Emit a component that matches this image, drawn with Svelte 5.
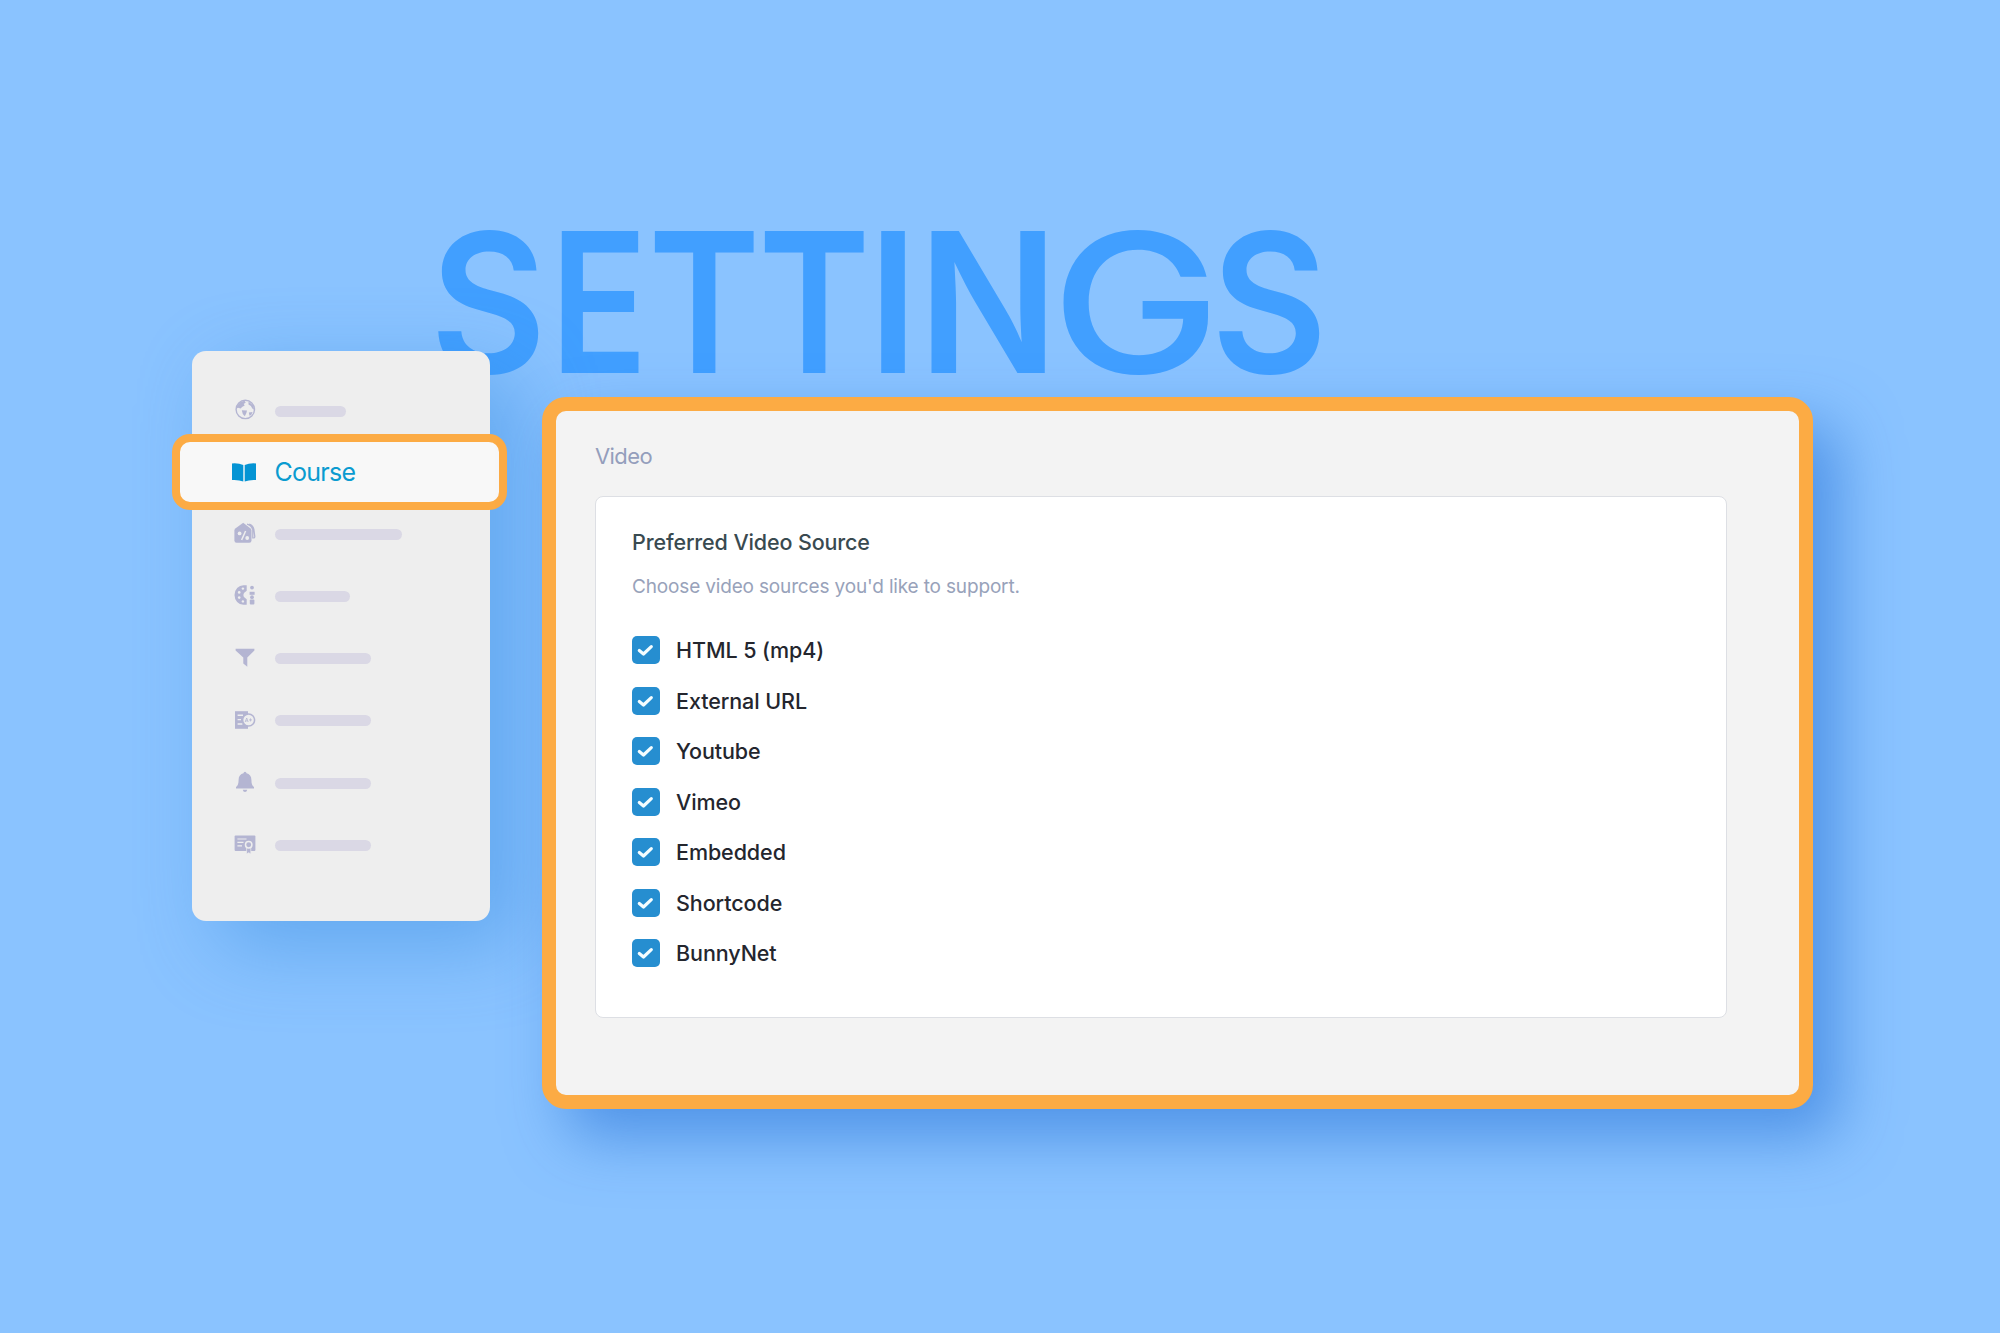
<script>
  // Each letter: slot width in px, horizontal scale and weight.
  const title = [
    { ch: 'S', slot: 119.8, scale: 0.921, weight: 580 },
    { ch: 'E', slot: 98.3, scale: 0.83, weight: 600 },
    { ch: 'T', slot: 109.5, scale: 0.876, weight: 590 },
    { ch: 'T', slot: 109.9, scale: 0.876, weight: 590 },
    { ch: 'I', slot: 50.3, scale: 0.93, weight: 590 },
    { ch: 'N', slot: 133.2, scale: 0.95, weight: 570 },
    { ch: 'G', slot: 159.6, scale: 1.17, weight: 530 },
    { ch: 'S', slot: 120, scale: 0.921, weight: 580 }
  ];
  const before = [{ icon: 'globe', width: 71 }];
  const after = [
    { icon: 'tag', width: 127 },
    { icon: 'instructor', width: 75 },
    { icon: 'funnel', width: 96 },
    { icon: 'grades', width: 96 },
    { icon: 'bell', width: 96 },
    { icon: 'certificate', width: 96 }
  ];
  const sources = ['HTML 5 (mp4)', 'External URL', 'Youtube', 'Vimeo', 'Embedded', 'Shortcode', 'BunnyNet'];
</script>

{#snippet icon(name)}
  <svg class="icon" viewBox="0 0 22 22" width="22" height="22" aria-hidden="true">
    {#if name === 'globe'}
      <circle cx="11.300" cy="10.400" r="9.200" fill="none" stroke="currentColor" stroke-width="1.400" />
      <path d="M3.200 6.500 6.500 3l4-1.200 1.200 1.800-2 1.400 1 1.400-2.700 1.600-1.200 1.400-2.800-.6-1.600.6zM7.800 11.200l5.200.2-.6 2.600-1.600 3.200-2-2.200zM14.500 2.600l4.700 3.800.9 4.400-1.800-1.200-1.400-2.600-2.400-1.600zM14.800 13.400l3.800-.4-1.400 3-1.700.8z" fill="currentColor" />
    {:else if name === 'tag'}
      <path d="M9.200.8 16.600 6.400Q17.500 7.200 17.500 8.400V18.500Q17.500 20.700 15.300 20.700H2.600Q.4 20.700.4 18.500V8.400Q.4 7.200 1.300 6.400z" fill="currentColor" />
      <path d="M13 2.200Q17.200 3.400 18.800 7.600V16.500M15.200 2.200Q18.800 3.200 19.800 7.200L20.800 14.600Q20.800 15.900 19.600 16.200" fill="none" stroke="currentColor" stroke-width="1.300" />
      <path d="M11.600 9 7.600 18" stroke="#eee" stroke-width="1.500" />
      <circle cx="5.600" cy="11.400" r="1.900" fill="#eee" /><circle cx="13.200" cy="16" r="1.900" fill="#eee" />
    {:else if name === 'instructor'}
      <path d="M9.500 1.200h3.200v5.600l-2.200 1.600a4 4 0 0 0 0 5.200l2.200 1.600v5.600H9.500A9 9.800 0 0 1 9.500 1.200z" fill="currentColor" />
      <g fill="#eee"><circle cx="8.900" cy="4.600" r="1.200" /><circle cx="5.200" cy="8.400" r="1.300" /><circle cx="5.200" cy="13.600" r="1.300" /><circle cx="8.900" cy="17.400" r="1.200" /></g>
      <g fill="currentColor"><circle cx="18" cy="3.600" r="1.900" /><rect x="15.600" y="7.800" width="5" height="3" /><circle cx="18" cy="13.200" r="1.900" /><rect x="15.800" y="15.400" width="4.600" height="5.200" rx="1" /></g>
    {:else if name === 'funnel'}
      <path d="M1.600 1.800H20.400V3.600L13.300 10.600V19.800L9.300 16.600V10.600L1.600 3.600z" fill="currentColor" />
    {:else if name === 'grades'}
      <path d="M1 2.200H14V19.800H1z" fill="currentColor" />
      <path d="M3.600 6.200H9M3.600 10.600H7M3.600 15H8.400" stroke="#eee" stroke-width="1.400" />
      <circle cx="14.600" cy="11" r="6" fill="#eee" stroke="currentColor" stroke-width="1.500" />
      <path d="m11.200 13 1.500-4 1.500 4M11.700 11.900h2M15 10.900h3M16.500 9.400v3" fill="none" stroke="currentColor" stroke-width=".8" />
    {:else if name === 'bell'}
      <path d="M11 .8q1.400 0 1.500 1.500c3 .7 4.900 3 4.900 6.400 0 4 .9 6 2.600 7.400v1.300H2v-1.300c1.700-1.400 2.600-3.400 2.600-7.400 0-3.400 1.900-5.700 4.900-6.400Q9.600.8 11 .8zM8.700 18.800h4.600q-.6 2.200-2.300 2.200t-2.300-2.200z" fill="currentColor" />
    {:else}
      <path d="M1.600 2.400H20.400Q21.400 2.400 21.400 3.400V17Q21.400 18 20.400 18H1.600Q.6 18 .6 17V3.400Q.6 2.400 1.600 2.400z" fill="currentColor" />
      <path d="M3.400 6H12.500M3.400 9.400H9.500M3.400 12.800H8" stroke="#eee" stroke-width="1.200" />
      <path d="M12.600 14.500h4.200V21l-2.100-1.300-2.100 1.300z" fill="currentColor" stroke="#eee" stroke-width=".7" />
      <circle cx="14.700" cy="11.800" r="3.200" fill="currentColor" stroke="#eee" stroke-width="1.500" />
    {/if}
  </svg>
{/snippet}

{#snippet placeholder(row)}
  <li class="row">
    {@render icon(row.icon)}
    <span class="bar" style:width="{row.width}px"></span>
  </li>
{/snippet}

<main class="stage">
  <h1 class="title">{#each title as l}<span style:width="{l.slot}px" style:font-weight={l.weight} style:transform="scaleX({l.scale})">{l.ch}</span>{/each}</h1>

  <nav class="sidebar">
    <ul class="menu">
      {#each before as row}{@render placeholder(row)}{/each}
      <li class="active">
        <svg class="book" viewBox="0 0 24 19" width="24" height="19" aria-hidden="true">
          <path d="M0 .4Q6.500-.2 11.300 2.100V18.600Q6.500 16.500 0 17zM12.700 2.100Q17.500-.2 24 .4V17Q17.500 16.500 12.700 18.600z" fill="#0594d4" />
        </svg>
        <span class="course">Course</span>
      </li>
      {#each after as row}{@render placeholder(row)}{/each}
    </ul>
  </nav>

  <section class="panel">
    <h2>Video</h2>
    <div class="card">
      <h3>Preferred Video Source</h3>
      <p>Choose video sources you'd like to support.</p>
      <ul class="sources">
        {#each sources as label}
          <li>
            <span class="check">
              <svg viewBox="0 0 28 28" width="28" height="28" aria-hidden="true">
                <path d="M7.300 14.500 11.500 18 19.300 10.700" fill="none" stroke="#f4fdff" stroke-width="3.200" stroke-linecap="round" stroke-linejoin="round" />
              </svg>
            </span>
            <span class="label">{label}</span>
          </li>
        {/each}
      </ul>
    </div>
  </section>
</main>

<style>
  :global(body) { margin: 0; background: #8ac3ff; }
  .stage {
    position: relative;
    box-sizing: border-box;
    width: 2000px;
    height: 1333px;
    overflow: hidden;
    padding: 351px 0 0 192px;
    display: flex;
    align-items: flex-start;
    gap: 52px;
    background: #8ac3ff;
    font-family: Inter, "Liberation Sans", sans-serif;
  }
  ul { list-style: none; margin: 0; padding: 0; }
  .title {
    position: absolute;
    left: 430.200px;
    top: 203px;
    margin: 0;
    display: flex;
    font-size: 194.500px;
    line-height: 200px;
    color: #419fff;
  }
  .title span { display: block; flex: none; white-space: nowrap; transform-origin: 0 0; }
  .sidebar {
    position: relative;
    box-sizing: border-box;
    width: 298px;
    height: 570px;
    padding-top: 28px;
    border-radius: 14px;
    background: #eee;
    box-shadow: 28px 24px 80px rgba(50, 135, 220, .47);
  }
  .row {
    display: flex;
    align-items: center;
    height: 62.200px;
    padding-left: 42px;
    gap: 19px;
    color: #b4b5d2;
  }
  .icon { flex: none; }
  .bar { height: 11px; border-radius: 6px; background: #dad8e5; position: relative; top: 1px; }
  .active {
    box-sizing: border-box;
    display: flex;
    align-items: center;
    width: 335px;
    height: 76px;
    margin: -7px 0 -8px -20px;
    padding-left: 51.500px;
    gap: 19px;
    border: 8px solid #fcab44;
    border-radius: 18px;
    background: #f8f8f8;
  }
  .course { font-size: 25px; line-height: 30px; letter-spacing: -.75px; color: #0a9bd0; }
  .panel {
    position: relative;
    box-sizing: border-box;
    width: 1271px;
    height: 712px;
    margin-top: 46px;
    padding: 29px 72px 0 39px;
    border: 14px solid #fcab44;
    border-radius: 24px;
    background: #f3f3f3;
    box-shadow: 25px 28px 60px rgba(40, 115, 215, .6);
  }
  h2 { margin: 0; font-weight: 400; font-size: 22px; line-height: 32px; letter-spacing: -.6px; color: #949ebc; }
  .card {
    box-sizing: border-box;
    width: 1132px;
    height: 522px;
    margin-top: 24px;
    padding: 28px 0 0 36px;
    border: 1px solid #dddfe4;
    border-radius: 8px;
    background: #fff;
  }
  h3 { margin: 0; font-weight: 500; font-size: 21.500px; line-height: 34px; letter-spacing: -.13px; color: #394a50; }
  p { margin: 13px 0 0; font-size: 19px; line-height: 30px; letter-spacing: -.16px; color: #98a2ba; }
  .sources { margin-top: 23px; }
  .sources li { display: flex; align-items: center; gap: 16px; height: 50.500px; }
  .check { width: 28px; height: 28px; border-radius: 5px; background: #268ed0; flex: none; }
  .check svg { display: block; }
  .label { font-weight: 500; font-size: 21.500px; line-height: 30px; letter-spacing: -.08px; color: #24262e; }
</style>
